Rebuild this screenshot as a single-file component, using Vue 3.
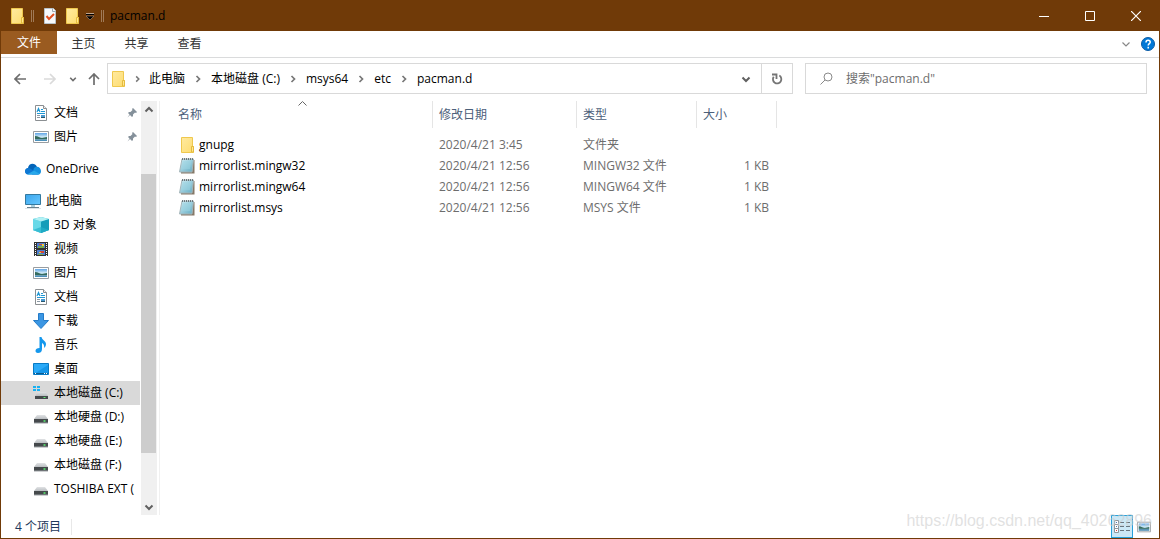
<script setup>
import { ref } from 'vue'

const title = 'pacman.d'
const tabs = ['主页', '共享', '查看']
const crumbs = ['此电脑', '本地磁盘 (C:)', 'msys64', 'etc', 'pacman.d']
const search = ref('')

const groups = [
  [
    { label: '文档', icon: 'doc', child: true, pinned: true },
    { label: '图片', icon: 'pic', child: true, pinned: true },
  ],
  [{ label: 'OneDrive', icon: 'cloud' }],
  [
    { label: '此电脑', icon: 'pc' },
    { label: '3D 对象', icon: 'cube', child: true },
    { label: '视频', icon: 'video', child: true },
    { label: '图片', icon: 'pic', child: true },
    { label: '文档', icon: 'doc', child: true },
    { label: '下载', icon: 'down', child: true },
    { label: '音乐', icon: 'music', child: true },
    { label: '桌面', icon: 'desk', child: true },
    { label: '本地磁盘 (C:)', icon: 'sysdrive', child: true, selected: true },
    { label: '本地硬盘 (D:)', icon: 'drive', child: true },
    { label: '本地硬盘 (E:)', icon: 'drive', child: true },
    { label: '本地磁盘 (F:)', icon: 'drive', child: true },
    { label: 'TOSHIBA EXT (', icon: 'drive', child: true },
  ],
]

const files = [
  { name: 'gnupg', date: '2020/4/21 3:45', type: '文件夹', size: '', icon: 'folder' },
  { name: 'mirrorlist.mingw32', date: '2020/4/21 12:56', type: 'MINGW32 文件', size: '1 KB', icon: 'note' },
  { name: 'mirrorlist.mingw64', date: '2020/4/21 12:56', type: 'MINGW64 文件', size: '1 KB', icon: 'note' },
  { name: 'mirrorlist.msys', date: '2020/4/21 12:56', type: 'MSYS 文件', size: '1 KB', icon: 'note' },
]
</script>

<template>
  <div class="window">
    <svg class="defs" aria-hidden="true">
      <defs>
        <linearGradient id="gFolder" x1="0" y1="0" x2="1" y2="1">
          <stop offset="0" stop-color="#ffeaa0" /><stop offset="1" stop-color="#fddc70" />
        </linearGradient>
        <linearGradient id="gSky" x1="0" y1="0" x2="0" y2="1">
          <stop offset="0" stop-color="#5fa4e6" /><stop offset=".5" stop-color="#d4ecf6" />
          <stop offset="1" stop-color="#35718f" />
        </linearGradient>
        <linearGradient id="gScreen" x1="0" y1="0" x2="1" y2="1">
          <stop offset="0" stop-color="#3aa5ec" /><stop offset="1" stop-color="#67c8ff" />
        </linearGradient>
        <linearGradient id="gNote" x1="0" y1="0" x2="1" y2="1">
          <stop offset="0" stop-color="#d3eef5" /><stop offset="1" stop-color="#61abc2" />
        </linearGradient>
        <linearGradient id="gDrive" x1="0" y1="0" x2="0" y2="1">
          <stop offset="0" stop-color="#e1e3e5" /><stop offset="1" stop-color="#b9bdc0" />
        </linearGradient>
      </defs>
      <symbol id="folder" viewBox="0 0 16 16">
        <path d="M2.500.5h11v9h1v6h-12z" fill="url(#gFolder)" stroke="#efc84e" />
        <path d="M12.500 15V9.500h2V15z" fill="#ffe791" stroke="#e5bb3d" />
      </symbol>
      <symbol id="doc" viewBox="0 0 16 16">
        <path d="M2.500.5h8l3 3v12h-11z" fill="#fff" stroke="#8b8f92" />
        <path d="M10.500.5v3h3" fill="#eee" stroke="#8b8f92" />
        <path d="M4 7 5.500 3.500 7 7M8 4.500h2M8 6.500h4M4 8.500h8" fill="none" stroke="#1f97d4" stroke-width="1.200" />
        <path d="M4 10.500h3M4 12.500h3" stroke="#8b98a4" />
        <path d="M8 10h4v3H8z" fill="#4a9ad0" /><path d="M8 12h4v1H8z" fill="#27556e" />
      </symbol>
      <symbol id="pic" viewBox="0 0 16 16">
        <path d="M.5 2.500h15v11H.5z" fill="#fff" stroke="#989da1" />
        <path d="M2 4h12v8H2z" fill="url(#gSky)" />
        <path d="M2 7c3 0 5 2 7 2s3-1 5-1v2H2z" fill="#356c5e" />
        <path d="M2 11h12v1H2z" fill="#4c91bb" />
      </symbol>
      <symbol id="cloud" viewBox="0 0 16 16">
        <path d="M3 7c.5-5 7-6 9-1l-1 7H3C-1 13-.5 7.500 3 7z" fill="#0364b8" />
        <path d="M9 7c3-3 7-.500 7 3 0 2-1 3.500-3 3.500H7z" fill="#1490df" />
        <path d="M0 10c0-3 4-4 6-2l8 5-1 .5H3c-2 0-3-1.500-3-3.500z" fill="#0f78d4" />
        <path d="M2 13.500 9 9.500l6 3.500-1.500.5z" fill="#28a8ea" />
      </symbol>
      <symbol id="pc" viewBox="0 0 16 16">
        <path d="M.5 1.500h15v10H.5z" fill="url(#gScreen)" stroke="#34799f" />
        <path d="M6 12h4v2H6z" fill="#a7cfde" /><path d="M2 14.500h12" stroke="#69818e" />
        <path d="M0 15.500h16" stroke="#dce5e9" />
      </symbol>
      <symbol id="cube" viewBox="0 0 16 16">
        <path d="m0 2 8-2 8 2v11l-8 3-8-3z" fill="#30b8d2" />
        <path d="m0 2 8 2.500V16l-8-3z" fill="#68d9e8" />
        <path d="m8 4.500 8-2.500v11l-8 3z" fill="#159db9" />
        <path d="m0 2 8-2 8 2-8 2.500z" fill="#b2f1f4" />
        <path d="m0 13 8-3 8 3-8 3z" fill="#23b1ca" opacity=".7" />
      </symbol>
      <symbol id="video" viewBox="0 0 16 16">
        <path d="M1 1h14v14H1z" fill="#333" />
        <path d="M4 2h8v5H4zM4 9h8v5H4z" fill="#4e7fd0" />
        <path d="M6 3h3v1H6zM7 10h4v2H7z" fill="#d44632" />
        <path d="M5 5h6v2H5zM5 13h5v1H5z" fill="#78a950" /><path d="M9 3h2v2H9zM6 11h2v1H6z" fill="#f5ce3a" />
        <path d="M2.500 2v13M13.500 2v13" stroke="#fff" stroke-dasharray="1 1" />
      </symbol>
      <symbol id="down" viewBox="0 0 16 16">
        <path d="M5.500.5h5v7h5L8 15.500.5 7.500h5z" fill="#3b96e3" stroke="#247bc8" />
      </symbol>
      <symbol id="music" viewBox="0 0 16 16">
        <path d="M6.500 0h2c.5 3 4.500 4 4.500 7 0 2-1 3-2 4 .5-3-.500-4-2-5v6c0 3-2 4-4 4-3.500 0-3.500-5 1.500-5z" fill="#1598ed" />
      </symbol>
      <symbol id="desk" viewBox="0 0 16 16">
        <path d="M.5 2.500h15v11H.5z" fill="#2baaf8" stroke="#087ac4" />
        <path d="M1 13 15 4v9z" fill="#1697e9" /><path d="M1 12.500h14" stroke="#0a5c91" />
        <path d="M2 12.500h1M11 12.500h1M13 12.500h1" stroke="#fff" />
      </symbol>
      <symbol id="drive" viewBox="0 0 16 16">
        <path d="M4 6h8l3 4H1z" fill="url(#gDrive)" />
        <path d="M1 10h14v4H1z" fill="#45494c" /><path d="M1 14h14" stroke="#9ba0a3" />
        <path d="M10.500 12h2" stroke="#5af270" stroke-width="1.500" />
      </symbol>
      <symbol id="sysdrive" viewBox="0 0 16 16">
        <path d="M5 7h8l2 4H2z" fill="url(#gDrive)" />
        <path d="M2 11h13v3H2z" fill="#45494c" /><path d="M10.500 12.500h2" stroke="#5af270" />
        <path d="M0 1h3v2H0zM4 1h3v2H4zM0 4h3v2H0zM4 4h3v2H4z" fill="#17b1f2" />
      </symbol>
      <symbol id="note" viewBox="0 0 16 16">
        <path d="M13 2h2.500v13.500H2V14h10z" fill="#857968" />
        <path d="M3 1h11.500l-1.500 13H.500z" fill="url(#gNote)" stroke="#a5b5b9" />
        <path d="M3.500 4h8.500M3.200 6h8.500M2.900 8h8.500M2.600 10h8.500" stroke="#9bd4e2" />
        <path d="M3 1h12" stroke="#515b60" stroke-width="1.500" stroke-dasharray="1 1" />
      </symbol>
      <symbol id="pin" viewBox="0 0 10 10">
        <path d="M6 0 10 4 9 5 8 4.500 6 6.500V8L5 9 3 7 .5 9.500 0 10 .5 9.500 2.500 6.500 1 5l1-1h1.500l2-2L5 1z" fill="#84909a" />
      </symbol>
      <symbol id="chev" viewBox="0 0 10 10">
        <path d="m1.500 3.500 3.500 3.500 3.500-3.500" fill="none" stroke="currentColor" stroke-width="var(--w, 2)" />
      </symbol>
    </svg>

    <header class="titlebar">
      <svg class="icon"><use href="#folder" /></svg>
      <i class="grip"></i>
      <button class="quick" aria-label="属性">
        <svg class="icon" viewBox="0 0 16 16">
          <path d="M2.500.5h9l2 2v13h-11z" fill="#f7f9fb" stroke="#b9c3ca" />
          <path d="M10.500.5v3h3" fill="none" stroke="#9eabb3" />
          <path d="m4.500 8 2.500 3 5-5" fill="none" stroke="#e35020" stroke-width="2" />
        </svg>
      </button>
      <button class="quick next" aria-label="新建文件夹"><svg class="icon"><use href="#folder" /></svg></button>
      <button class="quick more" aria-label="自定义快速访问工具栏">
        <svg width="8" height="8" viewBox="0 0 8 8">
          <path d="M0 1.500h8" stroke="#bda38e" /><path d="M0 2.500h8" stroke="#000" />
          <path d="M0 4h8L4 8z" fill="#000" stroke="#bda38e" stroke-width=".5" />
        </svg>
      </button>
      <i class="grip last"></i>
      <h1>{{ title }}</h1>
      <div class="controls">
        <button aria-label="最小化"><svg width="10" height="10"><path d="M0 5.500h10" stroke="#fff" /></svg></button>
        <button aria-label="最大化"><svg width="10" height="10"><path d="M.5.5h9v9h-9z" fill="none" stroke="#fff" /></svg></button>
        <button aria-label="关闭"><svg width="10" height="10"><path d="m0 0 10 10M10 0 0 10" stroke="#fff" stroke-width="1.200" /></svg></button>
      </div>
    </header>

    <nav class="ribbon">
      <button class="file">文件</button>
      <button v-for="t in tabs" :key="t" class="tab">{{ t }}</button>
      <button class="expand" aria-label="展开功能区"><svg class="small thin"><use href="#chev" /></svg></button>
      <button class="help" aria-label="帮助">
        <svg width="14" height="14" viewBox="0 0 14 14">
          <circle cx="7" cy="7" r="6.500" fill="#0078d7" stroke="#0b5ba5" />
          <path d="M5 5.500C5 2.500 9.200 2.800 9.200 5.200 9.200 6.800 7.200 6.600 7.200 8.600M7.200 9.800v1.700" fill="none" stroke="#fff" stroke-width="1.500" />
        </svg>
      </button>
    </nav>

    <div class="navbar">
      <button class="nav back" aria-label="后退">
        <svg width="12" height="12" viewBox="0 0 12 12"><path d="M12 6H1M6 1 1 6l5 5" fill="none" stroke="#6d6d6d" stroke-width="1.700" /></svg>
      </button>
      <button class="nav forward" aria-label="前进">
        <svg width="12" height="12" viewBox="0 0 12 12"><path d="M0 6h11M6 1l5 5-5 5" fill="none" stroke="#dadada" stroke-width="1.700" /></svg>
      </button>
      <button class="nav recent" aria-label="最近浏览的位置"><svg width="8" height="8"><use href="#chev" /></svg></button>
      <button class="nav up" aria-label="向上">
        <svg width="12" height="12" viewBox="0 0 12 12"><path d="M6 12V1M1 6l5-5 5 5" fill="none" stroke="#6d6d6d" stroke-width="1.700" /></svg>
      </button>
      <div class="address">
        <svg class="icon"><use href="#folder" /></svg>
        <template v-for="c in crumbs" :key="c">
          <svg class="sep" viewBox="0 0 26 10"><path d="m11.500 2 3 3-3 3" fill="none" stroke="#777" stroke-width="1.700" /></svg>
          <button>{{ c }}</button>
        </template>
        <button class="history" aria-label="历史记录"><svg class="small"><use href="#chev" /></svg></button>
        <button class="refresh" aria-label="刷新">
          <svg width="12" height="12" viewBox="0 0 12 12">
            <path d="M8.300 2.600A4.200 4.200 0 1 1 2.700 3.800" fill="none" stroke="#757575" stroke-width="1.800" />
            <path d="M1 1.500h4.500V6" fill="none" stroke="#757575" stroke-width="1.800" />
          </svg>
        </button>
      </div>
      <label class="search">
        <svg width="13" height="13" viewBox="0 0 13 13"><circle cx="8" cy="5" r="4" fill="none" stroke="#8a8a8a" /><path d="M5 8 .5 12.500" stroke="#8a8a8a" /></svg>
        <input v-model="search" type="text" placeholder='搜索"pacman.d"' aria-label="搜索" />
      </label>
    </div>

    <div class="body">
      <aside class="side">
        <div class="tree">
          <ul v-for="(g, i) in groups" :key="i">
            <li v-for="n in g" :key="n.label">
              <button :class="{ child: n.child, selected: n.selected }">
                <svg class="icon"><use :href="'#' + n.icon" /></svg>
                <span>{{ n.label }}</span>
                <svg v-if="n.pinned" class="pin"><use href="#pin" /></svg>
              </button>
            </li>
          </ul>
        </div>
        <div class="scroll">
          <button class="flip" aria-label="向上滚动"><svg class="small"><use href="#chev" /></svg></button>
          <div class="track"><div class="thumb"></div></div>
          <button aria-label="向下滚动"><svg class="small"><use href="#chev" /></svg></button>
        </div>
      </aside>
      <main>
        <table>
          <colgroup><col class="c-name" /><col class="c-date" /><col class="c-type" /><col class="c-size" /></colgroup>
          <thead>
            <tr>
              <th>名称<svg class="sort" viewBox="0 0 9 5"><path d="m.5 4.500 4-4 4 4" fill="none" stroke="#666" /></svg></th>
              <th>修改日期</th><th>类型</th><th>大小</th>
            </tr>
          </thead>
          <tbody>
            <tr v-for="f in files" :key="f.name">
              <td><div class="name"><svg class="icon"><use :href="'#' + f.icon" /></svg><span>{{ f.name }}</span></div></td>
              <td>{{ f.date }}</td><td>{{ f.type }}</td><td>{{ f.size }}</td>
            </tr>
          </tbody>
        </table>
      </main>
    </div>

    <footer>
      <span class="count">4 个项目</span>
      <div class="views">
        <button class="on" aria-label="详细信息">
          <svg width="16" height="14" viewBox="0 0 16 14">
            <path d="M.5.500h4v12h-4zM.5 4.500h4M.5 8.500h4" fill="#fff" stroke="#8d969c" />
            <path d="M2 2.500h1M2 6.500h1" stroke="#477db5" /><path d="M2 10.500h1" stroke="#d83b3b" />
            <path d="M6 2.500h4M12 2.500h4M6 6.500h4M12 6.500h4M6 10.500h4M12 10.500h4" stroke="#697780" />
          </svg>
        </button>
        <button aria-label="大图标"><svg class="view-pic"><use href="#pic" /></svg></button>
      </div>
      <span class="watermark">https://blog.csdn.net/qq_40262896</span>
    </footer>
  </div>
</template>

<style>
body {
  margin: 0;
}
</style>

<style scoped>
.window {
  display: flex;
  flex-direction: column;
  box-sizing: border-box;
  min-height: 100vh;
  border: 1px solid #703a08;
  border-top: 0;
  background: #fff;
  color: #000;
  font: 12px/16px "Open Sans", "Noto Sans", "Noto Sans CJK SC", sans-serif;
}
.defs {
  position: absolute;
  width: 0;
  height: 0;
}
svg {
  flex: none;
}
button {
  display: flex;
  align-items: center;
  justify-content: center;
  margin: 0;
  padding: 0;
  border: 0;
  background: none;
  color: inherit;
  font: inherit;
  white-space: nowrap;
}
.icon {
  width: 16px;
  height: 16px;
}
.small {
  width: 10px;
  height: 10px;
  color: #606060;
}
.titlebar {
  display: flex;
  align-items: center;
  height: 31px;
  padding-left: 8px;
  background: #703a08;
}
.grip {
  width: 1px;
  height: 12px;
  margin: 0 8px 0 6px;
  border: 1px solid #a07a57;
  border-width: 0 1px;
}
.grip.last {
  margin: 0 6px 0 7px;
}
.next {
  margin-left: 6px;
}
.more {
  margin-left: 6px;
}
h1 {
  margin: 0;
  font: inherit;
}
.controls {
  display: flex;
  align-self: stretch;
  margin-left: auto;
}
.controls button {
  width: 46px;
}
.ribbon {
  display: flex;
  height: 26px;
  border-bottom: 1px solid #dadbdc;
  color: #333;
}
.ribbon button {
  height: 25px;
}
.ribbon .tab {
  width: 53px;
}
.ribbon .file {
  width: 56px;
  height: 23px;
  background: #9a5b20;
  color: #fff;
}
.ribbon .expand {
  width: 20px;
  margin-left: auto;
}
.thin {
  --w: 1.2;
  color: #888;
}
.ribbon .help {
  width: 20px;
  margin: 0 1px 0 2px;
}
.navbar {
  display: flex;
  align-items: center;
  padding: 5px 12px 7px 13px;
}
.nav {
  height: 31px;
}
.forward {
  margin-left: 18px;
}
.recent {
  margin-left: 13px;
  color: #6d6d6d;
}
.up {
  margin: 0 7px 0 11px;
}
.address {
  display: flex;
  flex: 1;
  align-items: center;
  box-sizing: border-box;
  height: 31px;
  padding-left: 2px;
  border: 1px solid #d9d9d9;
}
.sep {
  width: 26px;
  height: 10px;
}
.icon + .sep {
  width: 23px;
}
.history {
  width: 30px;
  margin-left: auto;
}
.refresh {
  width: 31px;
  height: 29px;
  border-left: 1px solid #d9d9d9;
}
.search {
  display: flex;
  flex: 0 1 342px;
  align-items: center;
  box-sizing: border-box;
  gap: 13px;
  height: 31px;
  margin-left: 12px;
  padding-left: 14px;
  border: 1px solid #d9d9d9;
}
.search input {
  flex: 1;
  min-width: 0;
  padding: 0;
  border: 0;
  outline: 0;
  background: none;
  font: inherit;
}
.search input::placeholder {
  color: #6d6d6d;
  opacity: 1;
}
.body {
  display: flex;
  flex: 1;
}
.side {
  display: flex;
  width: 156px;
  padding-right: 2px;
  border-right: 1px solid #f0f0f0;
}
.tree {
  flex: 1;
  min-width: 0;
  overflow: hidden;
}
.tree ul {
  margin: 0 0 8px;
  padding: 0;
  list-style: none;
}
.tree button {
  justify-content: flex-start;
  gap: 5px;
  width: 139px;
  height: 24px;
  padding-left: 24px;
}
.tree .child {
  padding-left: 32px;
}
.tree .selected {
  background: #d9d9d9;
}
.pin {
  width: 10px;
  height: 10px;
  margin: 0 3px 0 auto;
}
.scroll {
  display: flex;
  flex-direction: column;
  width: 16px;
  background: #f0f0f0;
}
.scroll button {
  height: 17px;
}
.flip svg {
  transform: rotate(180deg);
}
.track {
  flex: 1;
  padding: 56px 1px 45px 0;
}
.thumb {
  height: 100%;
  background: #cdcdcd;
}
table {
  border-collapse: separate;
  border-spacing: 0;
  table-layout: fixed;
  width: 617px;
}
.c-name {
  width: 273px;
}
.c-date {
  width: 144px;
}
.c-type {
  width: 120px;
}
.c-size {
  width: 80px;
}
th {
  position: relative;
  height: 27px;
  padding: 0 0 0 6px;
  border-right: 1px solid #e5e5e5;
  color: #4c607a;
  font-weight: normal;
  text-align: left;
}
th:first-child {
  padding-left: 18px;
}
.sort {
  position: absolute;
  top: 0;
  right: 125px;
  width: 9px;
  height: 5px;
}
tbody::before {
  content: "";
  display: block;
  height: 6px;
}
td {
  height: 21px;
  padding: 0 0 0 6px;
  color: #6d6d6d;
  white-space: nowrap;
}
td:first-child {
  padding-left: 19px;
  color: #000;
}
td:last-child {
  padding-right: 8px;
  text-align: right;
}
.name {
  display: flex;
  align-items: center;
  gap: 4px;
}
footer {
  display: flex;
  position: relative;
  align-items: center;
  height: 23px;
  padding-left: 14px;
  color: #1e395b;
}
.count {
  padding-right: 10px;
  border-right: 1px solid #e8e8e8;
}
.views {
  display: flex;
  margin: 0 4px 0 auto;
}
.views button {
  width: 22px;
  height: 23px;
}
.views .on {
  box-sizing: border-box;
  border: 1px solid #26a0da;
  background: #cbe8f6;
}
.view-pic {
  width: 14px;
  height: 14px;
}
.watermark {
  position: absolute;
  right: 7px;
  bottom: 8px;
  color: rgba(205, 205, 205, 0.6);
  font: 16px/18px "Liberation Sans", sans-serif;
  pointer-events: none;
}
</style>
